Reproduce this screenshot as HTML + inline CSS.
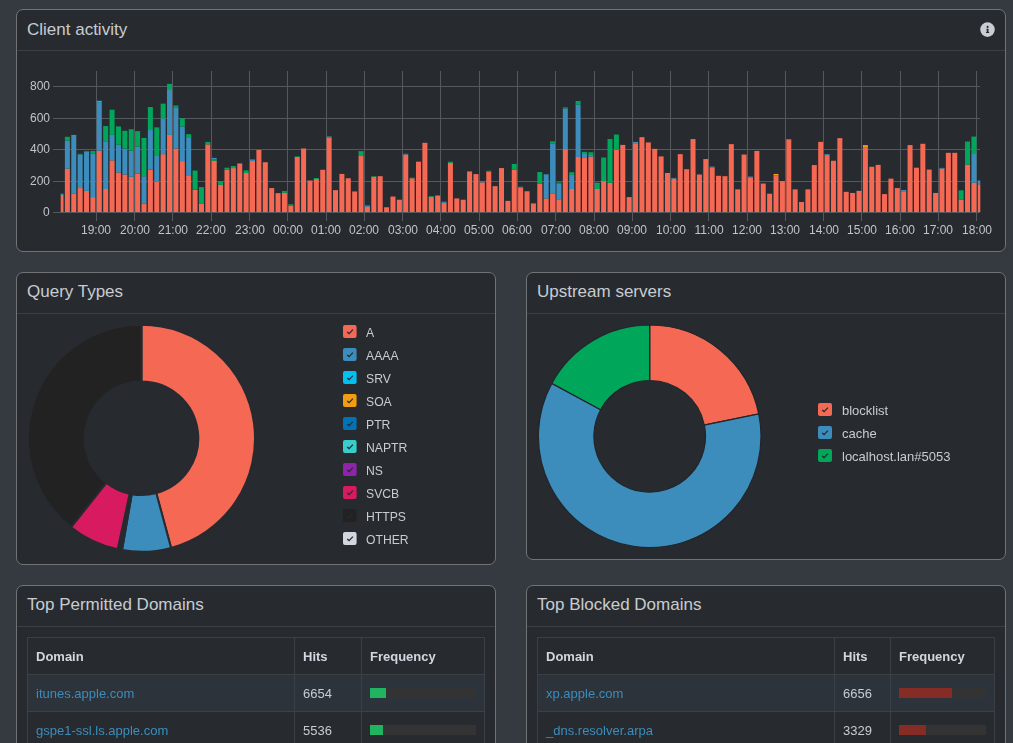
<!DOCTYPE html>
<html><head><meta charset="utf-8"><style>
html,body{margin:0;padding:0;}
body{width:1013px;height:743px;overflow:hidden;background:#343a40;position:relative;font-family:"Liberation Sans", sans-serif;}
.p{position:absolute;box-sizing:border-box;background:#272b30;border:1px solid #717375;border-radius:7px;}
.t{position:absolute;white-space:nowrap;}
</style></head><body>
<div class="p" style="left:16px;top:9px;width:990px;height:243px;"></div><div style="position:absolute;left:17px;top:50px;width:988px;height:1px;background:#393f46"></div>
<div class="t" style="left:27px;top:20.61px;font-size:17px;line-height:17px;color:#c8ccd1;font-weight:normal;">Client activity</div>
<div class="p" style="left:16px;top:272px;width:480px;height:293px;"></div><div style="position:absolute;left:17px;top:313px;width:478px;height:1px;background:#393f46"></div>
<div class="t" style="left:27px;top:283.41px;font-size:17px;line-height:17px;color:#c8ccd1;font-weight:normal;">Query Types</div>
<div class="p" style="left:526px;top:272px;width:480px;height:288px;"></div><div style="position:absolute;left:527px;top:313px;width:478px;height:1px;background:#393f46"></div>
<div class="t" style="left:537px;top:283.41px;font-size:17px;line-height:17px;color:#c8ccd1;font-weight:normal;">Upstream servers</div>
<div class="p" style="left:16px;top:585px;width:480px;height:216px;"></div><div style="position:absolute;left:17px;top:626px;width:478px;height:1px;background:#393f46"></div>
<div class="t" style="left:27px;top:596.41px;font-size:17px;line-height:17px;color:#c8ccd1;font-weight:normal;">Top Permitted Domains</div>
<div class="p" style="left:526px;top:585px;width:480px;height:216px;"></div><div style="position:absolute;left:527px;top:626px;width:478px;height:1px;background:#393f46"></div>
<div class="t" style="left:537px;top:596.41px;font-size:17px;line-height:17px;color:#c8ccd1;font-weight:normal;">Top Blocked Domains</div>
<svg style="position:absolute;left:979px;top:21px" width="17" height="17" viewBox="0 0 17 17"><circle cx="8.5" cy="8.6" r="7.3" fill="#c9ced4"/><circle cx="8.6" cy="5.9" r="1.05" fill="#272b30"/><path d="M7.3 7.7H9.5V11H10.2V11.9H7V11H7.7V8.6H7.3Z" fill="#272b30"/></svg>
<svg style="position:absolute;left:0;top:0" width="1013" height="260">
<rect x="53" y="86" width="927" height="1" fill="#55595d"/>
<rect x="53" y="118" width="927" height="1" fill="#55595d"/>
<rect x="53" y="149" width="927" height="1" fill="#55595d"/>
<rect x="53" y="181" width="927" height="1" fill="#55595d"/>
<rect x="53" y="212" width="927" height="1" fill="#55595d"/>
<rect x="96" y="71" width="1" height="150" fill="#55595d"/>
<rect x="134" y="71" width="1" height="150" fill="#55595d"/>
<rect x="172" y="71" width="1" height="150" fill="#55595d"/>
<rect x="211" y="71" width="1" height="150" fill="#55595d"/>
<rect x="249" y="71" width="1" height="150" fill="#55595d"/>
<rect x="287" y="71" width="1" height="150" fill="#55595d"/>
<rect x="326" y="71" width="1" height="150" fill="#55595d"/>
<rect x="364" y="71" width="1" height="150" fill="#55595d"/>
<rect x="402" y="71" width="1" height="150" fill="#55595d"/>
<rect x="440" y="71" width="1" height="150" fill="#55595d"/>
<rect x="479" y="71" width="1" height="150" fill="#55595d"/>
<rect x="517" y="71" width="1" height="150" fill="#55595d"/>
<rect x="555" y="71" width="1" height="150" fill="#55595d"/>
<rect x="594" y="71" width="1" height="150" fill="#55595d"/>
<rect x="632" y="71" width="1" height="150" fill="#55595d"/>
<rect x="670" y="71" width="1" height="150" fill="#55595d"/>
<rect x="708" y="71" width="1" height="150" fill="#55595d"/>
<rect x="747" y="71" width="1" height="150" fill="#55595d"/>
<rect x="785" y="71" width="1" height="150" fill="#55595d"/>
<rect x="823" y="71" width="1" height="150" fill="#55595d"/>
<rect x="861" y="71" width="1" height="150" fill="#55595d"/>
<rect x="900" y="71" width="1" height="150" fill="#55595d"/>
<rect x="938" y="71" width="1" height="150" fill="#55595d"/>
<rect x="976" y="71" width="1" height="150" fill="#55595d"/>
<rect x="60.70" y="194.65" width="2.80" height="17.35" fill="#f56954"/>
<rect x="60.70" y="193.71" width="2.80" height="0.94" fill="#00c0ef"/>
<rect x="64.88" y="168.65" width="5.00" height="43.35" fill="#f56954"/>
<rect x="64.88" y="140.57" width="5.00" height="28.08" fill="#3c8dbc"/>
<rect x="64.88" y="136.81" width="5.00" height="3.77" fill="#00a65a"/>
<rect x="71.27" y="193.33" width="5.00" height="18.67" fill="#f56954"/>
<rect x="71.27" y="134.92" width="5.00" height="58.41" fill="#3c8dbc"/>
<rect x="77.65" y="188.06" width="5.00" height="23.94" fill="#f56954"/>
<rect x="77.65" y="154.52" width="5.00" height="33.54" fill="#3c8dbc"/>
<rect x="77.65" y="153.76" width="5.00" height="0.75" fill="#00a65a"/>
<rect x="84.04" y="190.88" width="5.00" height="21.12" fill="#f56954"/>
<rect x="84.04" y="151.69" width="5.00" height="39.19" fill="#3c8dbc"/>
<rect x="84.04" y="150.94" width="5.00" height="0.75" fill="#00a65a"/>
<rect x="90.42" y="197.10" width="5.00" height="14.90" fill="#f56954"/>
<rect x="90.42" y="153.76" width="5.00" height="43.34" fill="#3c8dbc"/>
<rect x="90.42" y="150.94" width="5.00" height="2.83" fill="#00a65a"/>
<rect x="96.80" y="150.75" width="5.00" height="61.25" fill="#f56954"/>
<rect x="96.80" y="102.51" width="5.00" height="48.24" fill="#3c8dbc"/>
<rect x="96.80" y="100.81" width="5.00" height="1.70" fill="#00c0ef"/>
<rect x="103.19" y="189.00" width="5.00" height="23.00" fill="#f56954"/>
<rect x="103.19" y="141.89" width="5.00" height="47.11" fill="#3c8dbc"/>
<rect x="103.19" y="126.06" width="5.00" height="15.83" fill="#00a65a"/>
<rect x="109.57" y="160.36" width="5.00" height="51.64" fill="#f56954"/>
<rect x="109.57" y="134.92" width="5.00" height="25.44" fill="#3c8dbc"/>
<rect x="109.57" y="109.67" width="5.00" height="25.25" fill="#00a65a"/>
<rect x="115.96" y="172.42" width="5.00" height="39.58" fill="#f56954"/>
<rect x="115.96" y="144.72" width="5.00" height="27.70" fill="#3c8dbc"/>
<rect x="115.96" y="126.44" width="5.00" height="18.28" fill="#00a65a"/>
<rect x="122.34" y="174.49" width="5.00" height="37.51" fill="#f56954"/>
<rect x="122.34" y="148.49" width="5.00" height="26.00" fill="#3c8dbc"/>
<rect x="122.34" y="130.78" width="5.00" height="17.71" fill="#00a65a"/>
<rect x="128.72" y="176.75" width="5.00" height="35.25" fill="#f56954"/>
<rect x="128.72" y="150.75" width="5.00" height="26.00" fill="#3c8dbc"/>
<rect x="128.72" y="129.27" width="5.00" height="21.48" fill="#00a65a"/>
<rect x="135.11" y="173.74" width="5.00" height="38.26" fill="#f56954"/>
<rect x="135.11" y="146.60" width="5.00" height="27.13" fill="#3c8dbc"/>
<rect x="135.11" y="131.15" width="5.00" height="15.45" fill="#00a65a"/>
<rect x="141.49" y="203.70" width="5.00" height="8.30" fill="#f56954"/>
<rect x="141.49" y="176.19" width="5.00" height="27.51" fill="#3c8dbc"/>
<rect x="141.49" y="137.94" width="5.00" height="38.25" fill="#00a65a"/>
<rect x="147.88" y="169.59" width="5.00" height="42.41" fill="#f56954"/>
<rect x="147.88" y="130.02" width="5.00" height="39.57" fill="#3c8dbc"/>
<rect x="147.88" y="107.03" width="5.00" height="22.99" fill="#00a65a"/>
<rect x="154.26" y="181.84" width="5.00" height="30.16" fill="#f56954"/>
<rect x="154.26" y="156.03" width="5.00" height="25.81" fill="#3c8dbc"/>
<rect x="154.26" y="127.38" width="5.00" height="28.64" fill="#00a65a"/>
<rect x="160.64" y="154.14" width="5.00" height="57.86" fill="#f56954"/>
<rect x="160.64" y="118.34" width="5.00" height="35.80" fill="#3c8dbc"/>
<rect x="160.64" y="103.64" width="5.00" height="14.70" fill="#00a65a"/>
<rect x="167.03" y="134.92" width="5.00" height="77.08" fill="#f56954"/>
<rect x="167.03" y="89.13" width="5.00" height="45.79" fill="#3c8dbc"/>
<rect x="167.03" y="83.86" width="5.00" height="5.28" fill="#00a65a"/>
<rect x="173.41" y="148.49" width="5.00" height="63.51" fill="#f56954"/>
<rect x="173.41" y="107.60" width="5.00" height="40.89" fill="#3c8dbc"/>
<rect x="173.41" y="105.53" width="5.00" height="2.07" fill="#00a65a"/>
<rect x="179.80" y="161.11" width="5.00" height="50.89" fill="#f56954"/>
<rect x="179.80" y="126.44" width="5.00" height="34.67" fill="#3c8dbc"/>
<rect x="179.80" y="118.34" width="5.00" height="8.10" fill="#00a65a"/>
<rect x="186.18" y="175.24" width="5.00" height="36.76" fill="#f56954"/>
<rect x="186.18" y="137.18" width="5.00" height="38.06" fill="#3c8dbc"/>
<rect x="186.18" y="134.17" width="5.00" height="3.01" fill="#00a65a"/>
<rect x="192.56" y="189.75" width="5.00" height="22.25" fill="#f56954"/>
<rect x="192.56" y="170.53" width="5.00" height="19.22" fill="#00a65a"/>
<rect x="198.95" y="203.89" width="5.00" height="8.11" fill="#f56954"/>
<rect x="198.95" y="187.12" width="5.00" height="16.77" fill="#00a65a"/>
<rect x="205.33" y="144.34" width="5.00" height="67.66" fill="#f56954"/>
<rect x="205.33" y="141.89" width="5.00" height="2.45" fill="#00a65a"/>
<rect x="211.72" y="160.74" width="5.00" height="51.26" fill="#f56954"/>
<rect x="211.72" y="159.42" width="5.00" height="1.32" fill="#00a65a"/>
<rect x="211.72" y="157.91" width="5.00" height="1.51" fill="#3c8dbc"/>
<rect x="218.10" y="184.85" width="5.00" height="27.15" fill="#f56954"/>
<rect x="218.10" y="181.09" width="5.00" height="3.77" fill="#00a65a"/>
<rect x="224.48" y="169.78" width="5.00" height="42.22" fill="#f56954"/>
<rect x="224.48" y="167.71" width="5.00" height="2.07" fill="#00a65a"/>
<rect x="230.87" y="168.08" width="5.00" height="43.92" fill="#f56954"/>
<rect x="230.87" y="166.01" width="5.00" height="2.07" fill="#00a65a"/>
<rect x="237.25" y="163.56" width="5.00" height="48.44" fill="#f56954"/>
<rect x="237.25" y="163.00" width="5.00" height="0.57" fill="#00a65a"/>
<rect x="243.64" y="172.98" width="5.00" height="39.02" fill="#f56954"/>
<rect x="243.64" y="170.35" width="5.00" height="2.64" fill="#00a65a"/>
<rect x="250.02" y="160.92" width="5.00" height="51.08" fill="#f56954"/>
<rect x="250.02" y="159.42" width="5.00" height="1.51" fill="#3c8dbc"/>
<rect x="256.40" y="150.00" width="5.00" height="62.00" fill="#f56954"/>
<rect x="262.79" y="162.24" width="5.00" height="49.76" fill="#f56954"/>
<rect x="269.17" y="188.06" width="5.00" height="23.94" fill="#f56954"/>
<rect x="275.56" y="193.15" width="5.00" height="18.85" fill="#f56954"/>
<rect x="281.94" y="192.77" width="5.00" height="19.23" fill="#f56954"/>
<rect x="281.94" y="191.07" width="5.00" height="1.70" fill="#00a65a"/>
<rect x="288.32" y="205.58" width="5.00" height="6.42" fill="#f56954"/>
<rect x="288.32" y="204.26" width="5.00" height="1.32" fill="#00a65a"/>
<rect x="294.71" y="156.97" width="5.00" height="55.03" fill="#f56954"/>
<rect x="294.71" y="156.40" width="5.00" height="0.57" fill="#00a65a"/>
<rect x="301.09" y="148.49" width="5.00" height="63.51" fill="#f56954"/>
<rect x="307.48" y="180.52" width="5.00" height="31.48" fill="#f56954"/>
<rect x="313.86" y="179.01" width="5.00" height="32.99" fill="#f56954"/>
<rect x="313.86" y="178.07" width="5.00" height="0.94" fill="#00a65a"/>
<rect x="320.24" y="169.78" width="5.00" height="42.22" fill="#f56954"/>
<rect x="326.63" y="137.56" width="5.00" height="74.44" fill="#f56954"/>
<rect x="326.63" y="136.43" width="5.00" height="1.13" fill="#3c8dbc"/>
<rect x="333.01" y="190.13" width="5.00" height="21.87" fill="#f56954"/>
<rect x="339.40" y="173.93" width="5.00" height="38.07" fill="#f56954"/>
<rect x="345.78" y="178.26" width="5.00" height="33.74" fill="#f56954"/>
<rect x="352.16" y="191.45" width="5.00" height="20.55" fill="#f56954"/>
<rect x="358.55" y="156.03" width="5.00" height="55.97" fill="#f56954"/>
<rect x="358.55" y="151.13" width="5.00" height="4.90" fill="#00a65a"/>
<rect x="364.93" y="206.90" width="5.00" height="5.10" fill="#f56954"/>
<rect x="364.93" y="205.39" width="5.00" height="1.51" fill="#3c8dbc"/>
<rect x="371.32" y="176.75" width="5.00" height="35.25" fill="#f56954"/>
<rect x="371.32" y="176.19" width="5.00" height="0.57" fill="#00a65a"/>
<rect x="377.70" y="176.19" width="5.00" height="35.81" fill="#f56954"/>
<rect x="384.08" y="207.28" width="5.00" height="4.72" fill="#f56954"/>
<rect x="390.47" y="196.54" width="5.00" height="15.46" fill="#f56954"/>
<rect x="396.85" y="199.74" width="5.00" height="12.26" fill="#f56954"/>
<rect x="403.24" y="154.52" width="5.00" height="57.48" fill="#f56954"/>
<rect x="403.24" y="153.76" width="5.00" height="0.75" fill="#3c8dbc"/>
<rect x="409.62" y="178.26" width="5.00" height="33.74" fill="#f56954"/>
<rect x="409.62" y="177.69" width="5.00" height="0.57" fill="#00a65a"/>
<rect x="416.00" y="161.68" width="5.00" height="50.32" fill="#f56954"/>
<rect x="422.39" y="142.83" width="5.00" height="69.17" fill="#f56954"/>
<rect x="428.77" y="196.73" width="5.00" height="15.27" fill="#f56954"/>
<rect x="428.77" y="195.97" width="5.00" height="0.75" fill="#00a65a"/>
<rect x="435.16" y="195.60" width="5.00" height="16.40" fill="#f56954"/>
<rect x="435.16" y="195.22" width="5.00" height="0.38" fill="#00a65a"/>
<rect x="441.54" y="202.76" width="5.00" height="9.24" fill="#f56954"/>
<rect x="441.54" y="201.63" width="5.00" height="1.13" fill="#3c8dbc"/>
<rect x="447.92" y="162.81" width="5.00" height="49.19" fill="#f56954"/>
<rect x="447.92" y="161.68" width="5.00" height="1.13" fill="#00a65a"/>
<rect x="454.31" y="198.42" width="5.00" height="13.58" fill="#f56954"/>
<rect x="460.69" y="199.74" width="5.00" height="12.26" fill="#f56954"/>
<rect x="467.08" y="172.04" width="5.00" height="39.96" fill="#f56954"/>
<rect x="467.08" y="171.10" width="5.00" height="0.94" fill="#00a65a"/>
<rect x="473.46" y="174.11" width="5.00" height="37.89" fill="#f56954"/>
<rect x="479.84" y="182.41" width="5.00" height="29.59" fill="#f56954"/>
<rect x="479.84" y="181.46" width="5.00" height="0.94" fill="#3c8dbc"/>
<rect x="486.23" y="171.48" width="5.00" height="40.52" fill="#f56954"/>
<rect x="486.23" y="170.72" width="5.00" height="0.75" fill="#00a65a"/>
<rect x="492.61" y="186.17" width="5.00" height="25.83" fill="#f56954"/>
<rect x="499.00" y="168.08" width="5.00" height="43.92" fill="#f56954"/>
<rect x="505.38" y="200.87" width="5.00" height="11.13" fill="#f56954"/>
<rect x="511.76" y="169.78" width="5.00" height="42.22" fill="#f56954"/>
<rect x="511.76" y="163.94" width="5.00" height="5.84" fill="#00a65a"/>
<rect x="518.15" y="187.68" width="5.00" height="24.32" fill="#f56954"/>
<rect x="518.15" y="186.74" width="5.00" height="0.94" fill="#3c8dbc"/>
<rect x="524.53" y="191.26" width="5.00" height="20.74" fill="#f56954"/>
<rect x="530.92" y="203.51" width="5.00" height="8.49" fill="#f56954"/>
<rect x="530.92" y="202.94" width="5.00" height="0.57" fill="#00a65a"/>
<rect x="537.30" y="183.72" width="5.00" height="28.28" fill="#f56954"/>
<rect x="537.30" y="172.04" width="5.00" height="11.68" fill="#00a65a"/>
<rect x="543.68" y="198.42" width="5.00" height="13.58" fill="#f56954"/>
<rect x="543.68" y="174.30" width="5.00" height="24.12" fill="#3c8dbc"/>
<rect x="550.07" y="193.33" width="5.00" height="18.67" fill="#f56954"/>
<rect x="550.07" y="143.78" width="5.00" height="49.56" fill="#3c8dbc"/>
<rect x="550.07" y="141.33" width="5.00" height="2.45" fill="#00a65a"/>
<rect x="556.45" y="199.36" width="5.00" height="12.64" fill="#f56954"/>
<rect x="556.45" y="183.54" width="5.00" height="15.83" fill="#3c8dbc"/>
<rect x="556.45" y="182.41" width="5.00" height="1.13" fill="#00a65a"/>
<rect x="562.84" y="149.05" width="5.00" height="62.95" fill="#f56954"/>
<rect x="562.84" y="108.54" width="5.00" height="40.51" fill="#3c8dbc"/>
<rect x="562.84" y="107.41" width="5.00" height="1.13" fill="#00a65a"/>
<rect x="569.22" y="189.00" width="5.00" height="23.00" fill="#f56954"/>
<rect x="569.22" y="174.87" width="5.00" height="14.13" fill="#3c8dbc"/>
<rect x="569.22" y="172.23" width="5.00" height="2.64" fill="#00a65a"/>
<rect x="575.60" y="156.97" width="5.00" height="55.03" fill="#f56954"/>
<rect x="575.60" y="104.58" width="5.00" height="52.38" fill="#3c8dbc"/>
<rect x="575.60" y="101.00" width="5.00" height="3.58" fill="#00a65a"/>
<rect x="581.99" y="157.91" width="5.00" height="54.09" fill="#f56954"/>
<rect x="581.99" y="153.20" width="5.00" height="4.71" fill="#3c8dbc"/>
<rect x="581.99" y="151.88" width="5.00" height="1.32" fill="#00a65a"/>
<rect x="588.37" y="156.59" width="5.00" height="55.41" fill="#f56954"/>
<rect x="588.37" y="154.89" width="5.00" height="1.70" fill="#3c8dbc"/>
<rect x="588.37" y="152.26" width="5.00" height="2.64" fill="#00a65a"/>
<rect x="594.76" y="189.00" width="5.00" height="23.00" fill="#f56954"/>
<rect x="594.76" y="183.91" width="5.00" height="5.09" fill="#00a65a"/>
<rect x="594.76" y="182.78" width="5.00" height="1.13" fill="#3c8dbc"/>
<rect x="601.14" y="181.09" width="5.00" height="30.91" fill="#f56954"/>
<rect x="601.14" y="157.53" width="5.00" height="23.55" fill="#00a65a"/>
<rect x="607.52" y="182.78" width="5.00" height="29.22" fill="#f56954"/>
<rect x="607.52" y="139.07" width="5.00" height="43.72" fill="#00a65a"/>
<rect x="613.91" y="149.81" width="5.00" height="62.19" fill="#f56954"/>
<rect x="613.91" y="134.54" width="5.00" height="15.26" fill="#00a65a"/>
<rect x="620.29" y="144.91" width="5.00" height="67.09" fill="#f56954"/>
<rect x="626.68" y="197.10" width="5.00" height="14.90" fill="#f56954"/>
<rect x="633.06" y="143.21" width="5.00" height="68.79" fill="#f56954"/>
<rect x="633.06" y="141.89" width="5.00" height="1.32" fill="#3c8dbc"/>
<rect x="639.44" y="137.18" width="5.00" height="74.82" fill="#f56954"/>
<rect x="645.83" y="142.46" width="5.00" height="69.54" fill="#f56954"/>
<rect x="652.21" y="148.86" width="5.00" height="63.14" fill="#f56954"/>
<rect x="658.60" y="156.40" width="5.00" height="55.60" fill="#f56954"/>
<rect x="664.98" y="172.98" width="5.00" height="39.02" fill="#f56954"/>
<rect x="671.36" y="178.64" width="5.00" height="33.36" fill="#f56954"/>
<rect x="671.36" y="177.88" width="5.00" height="0.75" fill="#3c8dbc"/>
<rect x="677.75" y="154.14" width="5.00" height="57.86" fill="#f56954"/>
<rect x="684.13" y="169.22" width="5.00" height="42.78" fill="#f56954"/>
<rect x="690.52" y="139.07" width="5.00" height="72.93" fill="#f56954"/>
<rect x="696.90" y="174.49" width="5.00" height="37.51" fill="#f56954"/>
<rect x="703.28" y="159.04" width="5.00" height="52.96" fill="#f56954"/>
<rect x="709.67" y="167.33" width="5.00" height="44.67" fill="#f56954"/>
<rect x="709.67" y="166.58" width="5.00" height="0.75" fill="#3c8dbc"/>
<rect x="716.05" y="175.81" width="5.00" height="36.19" fill="#f56954"/>
<rect x="722.44" y="176.19" width="5.00" height="35.81" fill="#f56954"/>
<rect x="728.82" y="144.15" width="5.00" height="67.85" fill="#f56954"/>
<rect x="735.20" y="189.38" width="5.00" height="22.62" fill="#f56954"/>
<rect x="741.59" y="154.52" width="5.00" height="57.48" fill="#f56954"/>
<rect x="747.97" y="177.32" width="5.00" height="34.68" fill="#f56954"/>
<rect x="747.97" y="176.56" width="5.00" height="0.75" fill="#3c8dbc"/>
<rect x="754.36" y="150.94" width="5.00" height="61.06" fill="#f56954"/>
<rect x="760.74" y="183.54" width="5.00" height="28.46" fill="#f56954"/>
<rect x="767.12" y="193.71" width="5.00" height="18.29" fill="#f56954"/>
<rect x="773.51" y="175.43" width="5.00" height="36.57" fill="#f56954"/>
<rect x="773.51" y="173.93" width="5.00" height="1.51" fill="#f39c12"/>
<rect x="779.89" y="181.09" width="5.00" height="30.91" fill="#f56954"/>
<rect x="786.28" y="140.01" width="5.00" height="71.99" fill="#f56954"/>
<rect x="786.28" y="139.07" width="5.00" height="0.94" fill="#3c8dbc"/>
<rect x="792.66" y="189.38" width="5.00" height="22.62" fill="#f56954"/>
<rect x="799.04" y="202.00" width="5.00" height="10.00" fill="#f56954"/>
<rect x="805.43" y="189.38" width="5.00" height="22.62" fill="#f56954"/>
<rect x="811.81" y="165.07" width="5.00" height="46.93" fill="#f56954"/>
<rect x="818.20" y="141.89" width="5.00" height="70.11" fill="#f56954"/>
<rect x="824.58" y="155.08" width="5.00" height="56.92" fill="#f56954"/>
<rect x="824.58" y="154.14" width="5.00" height="0.94" fill="#3c8dbc"/>
<rect x="830.96" y="160.74" width="5.00" height="51.26" fill="#f56954"/>
<rect x="837.35" y="138.12" width="5.00" height="73.88" fill="#f56954"/>
<rect x="843.73" y="191.83" width="5.00" height="20.17" fill="#f56954"/>
<rect x="850.12" y="192.96" width="5.00" height="19.04" fill="#f56954"/>
<rect x="856.50" y="190.88" width="5.00" height="21.12" fill="#f56954"/>
<rect x="862.88" y="147.17" width="5.00" height="64.83" fill="#f56954"/>
<rect x="862.88" y="145.10" width="5.00" height="2.07" fill="#f39c12"/>
<rect x="869.27" y="166.77" width="5.00" height="45.23" fill="#f56954"/>
<rect x="875.65" y="164.88" width="5.00" height="47.12" fill="#f56954"/>
<rect x="882.04" y="194.09" width="5.00" height="17.91" fill="#f56954"/>
<rect x="888.42" y="178.64" width="5.00" height="33.36" fill="#f56954"/>
<rect x="894.80" y="188.06" width="5.00" height="23.94" fill="#f56954"/>
<rect x="901.19" y="191.26" width="5.00" height="20.74" fill="#f56954"/>
<rect x="901.19" y="189.94" width="5.00" height="1.32" fill="#3c8dbc"/>
<rect x="907.57" y="145.10" width="5.00" height="66.90" fill="#f56954"/>
<rect x="913.96" y="167.71" width="5.00" height="44.29" fill="#f56954"/>
<rect x="920.34" y="143.78" width="5.00" height="68.22" fill="#f56954"/>
<rect x="926.72" y="169.59" width="5.00" height="42.41" fill="#f56954"/>
<rect x="933.11" y="192.96" width="5.00" height="19.04" fill="#f56954"/>
<rect x="939.49" y="168.65" width="5.00" height="43.35" fill="#f56954"/>
<rect x="939.49" y="167.90" width="5.00" height="0.75" fill="#3c8dbc"/>
<rect x="945.88" y="152.82" width="5.00" height="59.18" fill="#f56954"/>
<rect x="952.26" y="152.82" width="5.00" height="59.18" fill="#f56954"/>
<rect x="958.64" y="199.74" width="5.00" height="12.26" fill="#f56954"/>
<rect x="958.64" y="190.32" width="5.00" height="9.42" fill="#00a65a"/>
<rect x="965.03" y="164.50" width="5.00" height="47.50" fill="#f56954"/>
<rect x="965.03" y="141.52" width="5.00" height="22.99" fill="#00a65a"/>
<rect x="971.41" y="182.78" width="5.00" height="29.22" fill="#f56954"/>
<rect x="971.41" y="153.20" width="5.00" height="29.58" fill="#3c8dbc"/>
<rect x="971.41" y="136.62" width="5.00" height="16.58" fill="#00a65a"/>
<rect x="977.80" y="184.29" width="2.50" height="27.71" fill="#f56954"/>
<rect x="977.80" y="180.52" width="2.50" height="3.77" fill="#3c8dbc"/>
</svg>
<div class="t" style="right:963px;text-align:right;top:79.84px;font-size:12px;line-height:12px;color:#bfc5ca;font-weight:normal;will-change:transform;">800</div>
<div class="t" style="right:963px;text-align:right;top:111.84px;font-size:12px;line-height:12px;color:#bfc5ca;font-weight:normal;will-change:transform;">600</div>
<div class="t" style="right:963px;text-align:right;top:142.84px;font-size:12px;line-height:12px;color:#bfc5ca;font-weight:normal;will-change:transform;">400</div>
<div class="t" style="right:963px;text-align:right;top:174.84px;font-size:12px;line-height:12px;color:#bfc5ca;font-weight:normal;will-change:transform;">200</div>
<div class="t" style="right:963px;text-align:right;top:205.84px;font-size:12px;line-height:12px;color:#bfc5ca;font-weight:normal;will-change:transform;">0</div>
<div class="t" style="left:-103.6px;width:400px;text-align:center;top:224.34px;font-size:12px;line-height:12px;color:#bfc5ca;font-weight:normal;will-change:transform;">19:00</div>
<div class="t" style="left:-65.32px;width:400px;text-align:center;top:224.34px;font-size:12px;line-height:12px;color:#bfc5ca;font-weight:normal;will-change:transform;">20:00</div>
<div class="t" style="left:-27.05000000000001px;width:400px;text-align:center;top:224.34px;font-size:12px;line-height:12px;color:#bfc5ca;font-weight:normal;will-change:transform;">21:00</div>
<div class="t" style="left:11.22999999999999px;width:400px;text-align:center;top:224.34px;font-size:12px;line-height:12px;color:#bfc5ca;font-weight:normal;will-change:transform;">22:00</div>
<div class="t" style="left:49.50999999999999px;width:400px;text-align:center;top:224.34px;font-size:12px;line-height:12px;color:#bfc5ca;font-weight:normal;will-change:transform;">23:00</div>
<div class="t" style="left:87.77999999999997px;width:400px;text-align:center;top:224.34px;font-size:12px;line-height:12px;color:#bfc5ca;font-weight:normal;will-change:transform;">00:00</div>
<div class="t" style="left:126.06px;width:400px;text-align:center;top:224.34px;font-size:12px;line-height:12px;color:#bfc5ca;font-weight:normal;will-change:transform;">01:00</div>
<div class="t" style="left:164.33999999999997px;width:400px;text-align:center;top:224.34px;font-size:12px;line-height:12px;color:#bfc5ca;font-weight:normal;will-change:transform;">02:00</div>
<div class="t" style="left:202.62px;width:400px;text-align:center;top:224.34px;font-size:12px;line-height:12px;color:#bfc5ca;font-weight:normal;will-change:transform;">03:00</div>
<div class="t" style="left:240.89px;width:400px;text-align:center;top:224.34px;font-size:12px;line-height:12px;color:#bfc5ca;font-weight:normal;will-change:transform;">04:00</div>
<div class="t" style="left:279.17px;width:400px;text-align:center;top:224.34px;font-size:12px;line-height:12px;color:#bfc5ca;font-weight:normal;will-change:transform;">05:00</div>
<div class="t" style="left:317.45000000000005px;width:400px;text-align:center;top:224.34px;font-size:12px;line-height:12px;color:#bfc5ca;font-weight:normal;will-change:transform;">06:00</div>
<div class="t" style="left:355.72px;width:400px;text-align:center;top:224.34px;font-size:12px;line-height:12px;color:#bfc5ca;font-weight:normal;will-change:transform;">07:00</div>
<div class="t" style="left:394.0px;width:400px;text-align:center;top:224.34px;font-size:12px;line-height:12px;color:#bfc5ca;font-weight:normal;will-change:transform;">08:00</div>
<div class="t" style="left:432.28px;width:400px;text-align:center;top:224.34px;font-size:12px;line-height:12px;color:#bfc5ca;font-weight:normal;will-change:transform;">09:00</div>
<div class="t" style="left:470.54999999999995px;width:400px;text-align:center;top:224.34px;font-size:12px;line-height:12px;color:#bfc5ca;font-weight:normal;will-change:transform;">10:00</div>
<div class="t" style="left:508.83000000000004px;width:400px;text-align:center;top:224.34px;font-size:12px;line-height:12px;color:#bfc5ca;font-weight:normal;will-change:transform;">11:00</div>
<div class="t" style="left:547.11px;width:400px;text-align:center;top:224.34px;font-size:12px;line-height:12px;color:#bfc5ca;font-weight:normal;will-change:transform;">12:00</div>
<div class="t" style="left:585.39px;width:400px;text-align:center;top:224.34px;font-size:12px;line-height:12px;color:#bfc5ca;font-weight:normal;will-change:transform;">13:00</div>
<div class="t" style="left:623.66px;width:400px;text-align:center;top:224.34px;font-size:12px;line-height:12px;color:#bfc5ca;font-weight:normal;will-change:transform;">14:00</div>
<div class="t" style="left:661.94px;width:400px;text-align:center;top:224.34px;font-size:12px;line-height:12px;color:#bfc5ca;font-weight:normal;will-change:transform;">15:00</div>
<div class="t" style="left:700.22px;width:400px;text-align:center;top:224.34px;font-size:12px;line-height:12px;color:#bfc5ca;font-weight:normal;will-change:transform;">16:00</div>
<div class="t" style="left:738.49px;width:400px;text-align:center;top:224.34px;font-size:12px;line-height:12px;color:#bfc5ca;font-weight:normal;will-change:transform;">17:00</div>
<div class="t" style="left:776.77px;width:400px;text-align:center;top:224.34px;font-size:12px;line-height:12px;color:#bfc5ca;font-weight:normal;will-change:transform;">18:00</div>
<svg style="position:absolute;left:0;top:0" width="1013" height="743">
<path d="M141.50,324.80 A113.5,113.5 0 0 1 171.07,547.88 L156.30,493.14 A56.8,56.8 0 0 0 141.50,381.50 Z" fill="#f56954" stroke="#272b30" stroke-width="2"/>
<path d="M171.07,547.88 A113.5,113.5 0 0 1 121.99,550.11 L131.73,494.25 A56.8,56.8 0 0 0 156.30,493.14 Z" fill="#3c8dbc" stroke="#272b30" stroke-width="2"/>
<path d="M121.99,550.11 A113.5,113.5 0 0 1 117.71,549.28 L129.59,493.84 A56.8,56.8 0 0 0 131.73,494.25 Z" fill="#272b30" stroke="#272b30" stroke-width="2"/>
<path d="M117.71,549.28 A113.5,113.5 0 0 1 71.00,527.25 L106.22,482.81 A56.8,56.8 0 0 0 129.59,493.84 Z" fill="#d81b60" stroke="#272b30" stroke-width="2"/>
<path d="M71.00,527.25 A113.5,113.5 0 0 1 141.50,324.80 L141.50,381.50 A56.8,56.8 0 0 0 106.22,482.81 Z" fill="#222222" stroke="#272b30" stroke-width="2"/>
<path d="M649.70,325.00 A111.3,111.3 0 0 1 758.73,413.92 L704.36,425.08 A55.8,55.8 0 0 0 649.70,380.50 Z" fill="#f56954" stroke="#22262a" stroke-width="1.2"/>
<path d="M758.73,413.92 A111.3,111.3 0 1 1 551.80,383.36 L600.62,409.76 A55.8,55.8 0 1 0 704.36,425.08 Z" fill="#3c8dbc" stroke="#22262a" stroke-width="1.2"/>
<path d="M551.80,383.36 A111.3,111.3 0 0 1 649.70,325.00 L649.70,380.50 A55.8,55.8 0 0 0 600.62,409.76 Z" fill="#00a65a" stroke="#22262a" stroke-width="1.2"/>
</svg>
<svg style="position:absolute;left:343px;top:325px" width="13.6" height="13" viewBox="0 0 13.6 13"><rect x="0" y="0" width="13.6" height="13" rx="2" fill="#f56954"/><path d="M4.2 6.9 L6.1 8.6 L9.9 4.6" fill="none" stroke="#272b30" stroke-width="1.3"/></svg>
<div class="t" style="left:366px;top:326.67px;font-size:12.2px;line-height:12.2px;color:#c8ccd1;font-weight:normal;">A</div>
<svg style="position:absolute;left:343px;top:348px" width="13.6" height="13" viewBox="0 0 13.6 13"><rect x="0" y="0" width="13.6" height="13" rx="2" fill="#3c8dbc"/><path d="M4.2 6.9 L6.1 8.6 L9.9 4.6" fill="none" stroke="#272b30" stroke-width="1.3"/></svg>
<div class="t" style="left:366px;top:349.67px;font-size:12.2px;line-height:12.2px;color:#c8ccd1;font-weight:normal;">AAAA</div>
<svg style="position:absolute;left:343px;top:371px" width="13.6" height="13" viewBox="0 0 13.6 13"><rect x="0" y="0" width="13.6" height="13" rx="2" fill="#00c0ef"/><path d="M4.2 6.9 L6.1 8.6 L9.9 4.6" fill="none" stroke="#272b30" stroke-width="1.3"/></svg>
<div class="t" style="left:366px;top:372.67px;font-size:12.2px;line-height:12.2px;color:#c8ccd1;font-weight:normal;">SRV</div>
<svg style="position:absolute;left:343px;top:394px" width="13.6" height="13" viewBox="0 0 13.6 13"><rect x="0" y="0" width="13.6" height="13" rx="2" fill="#f39c12"/><path d="M4.2 6.9 L6.1 8.6 L9.9 4.6" fill="none" stroke="#272b30" stroke-width="1.3"/></svg>
<div class="t" style="left:366px;top:395.67px;font-size:12.2px;line-height:12.2px;color:#c8ccd1;font-weight:normal;">SOA</div>
<svg style="position:absolute;left:343px;top:417px" width="13.6" height="13" viewBox="0 0 13.6 13"><rect x="0" y="0" width="13.6" height="13" rx="2" fill="#0073b7"/><path d="M4.2 6.9 L6.1 8.6 L9.9 4.6" fill="none" stroke="#272b30" stroke-width="1.3"/></svg>
<div class="t" style="left:366px;top:418.67px;font-size:12.2px;line-height:12.2px;color:#c8ccd1;font-weight:normal;">PTR</div>
<svg style="position:absolute;left:343px;top:440px" width="13.6" height="13" viewBox="0 0 13.6 13"><rect x="0" y="0" width="13.6" height="13" rx="2" fill="#39cccc"/><path d="M4.2 6.9 L6.1 8.6 L9.9 4.6" fill="none" stroke="#272b30" stroke-width="1.3"/></svg>
<div class="t" style="left:366px;top:441.67px;font-size:12.2px;line-height:12.2px;color:#c8ccd1;font-weight:normal;">NAPTR</div>
<svg style="position:absolute;left:343px;top:463px" width="13.6" height="13" viewBox="0 0 13.6 13"><rect x="0" y="0" width="13.6" height="13" rx="2" fill="#8e24aa"/><path d="M4.2 6.9 L6.1 8.6 L9.9 4.6" fill="none" stroke="#272b30" stroke-width="1.3"/></svg>
<div class="t" style="left:366px;top:464.67px;font-size:12.2px;line-height:12.2px;color:#c8ccd1;font-weight:normal;">NS</div>
<svg style="position:absolute;left:343px;top:486px" width="13.6" height="13" viewBox="0 0 13.6 13"><rect x="0" y="0" width="13.6" height="13" rx="2" fill="#d81b60"/><path d="M4.2 6.9 L6.1 8.6 L9.9 4.6" fill="none" stroke="#272b30" stroke-width="1.3"/></svg>
<div class="t" style="left:366px;top:487.67px;font-size:12.2px;line-height:12.2px;color:#c8ccd1;font-weight:normal;">SVCB</div>
<svg style="position:absolute;left:343px;top:509px" width="13.6" height="13" viewBox="0 0 13.6 13"><rect x="0" y="0" width="13.6" height="13" rx="2" fill="#222222"/><path d="M4.2 6.9 L6.1 8.6 L9.9 4.6" fill="none" stroke="#272b30" stroke-width="1.3"/></svg>
<div class="t" style="left:366px;top:510.67px;font-size:12.2px;line-height:12.2px;color:#c8ccd1;font-weight:normal;">HTTPS</div>
<svg style="position:absolute;left:343px;top:532px" width="13.6" height="13" viewBox="0 0 13.6 13"><rect x="0" y="0" width="13.6" height="13" rx="2" fill="#d2d6de"/><path d="M4.2 6.9 L6.1 8.6 L9.9 4.6" fill="none" stroke="#272b30" stroke-width="1.3"/></svg>
<div class="t" style="left:366px;top:533.67px;font-size:12.2px;line-height:12.2px;color:#c8ccd1;font-weight:normal;">OTHER</div>
<svg style="position:absolute;left:818px;top:403px" width="14" height="13" viewBox="0 0 14 13"><rect x="0" y="0" width="14" height="13" rx="2" fill="#f56954"/><path d="M4.2 6.9 L6.1 8.6 L9.9 4.6" fill="none" stroke="#272b30" stroke-width="1.3"/></svg>
<div class="t" style="left:842px;top:404.00px;font-size:13px;line-height:13px;color:#c8ccd1;font-weight:normal;">blocklist</div>
<svg style="position:absolute;left:818px;top:426px" width="14" height="13" viewBox="0 0 14 13"><rect x="0" y="0" width="14" height="13" rx="2" fill="#3c8dbc"/><path d="M4.2 6.9 L6.1 8.6 L9.9 4.6" fill="none" stroke="#272b30" stroke-width="1.3"/></svg>
<div class="t" style="left:842px;top:427.00px;font-size:13px;line-height:13px;color:#c8ccd1;font-weight:normal;">cache</div>
<svg style="position:absolute;left:818px;top:449px" width="14" height="13" viewBox="0 0 14 13"><rect x="0" y="0" width="14" height="13" rx="2" fill="#00a65a"/><path d="M4.2 6.9 L6.1 8.6 L9.9 4.6" fill="none" stroke="#272b30" stroke-width="1.3"/></svg>
<div class="t" style="left:842px;top:450.00px;font-size:13px;line-height:13px;color:#c8ccd1;font-weight:normal;">localhost.lan#5053</div>
<div style="position:absolute;left:27px;top:674px;width:458px;height:37px;background:#2d333a"></div>
<div style="position:absolute;left:27px;top:637px;width:458px;height:200px;border:1px solid #3b4046;box-sizing:border-box"></div>
<div style="position:absolute;left:27px;top:674px;width:458px;height:1px;background:#3b4046"></div>
<div style="position:absolute;left:27px;top:711px;width:458px;height:1px;background:#3b4046"></div>
<div style="position:absolute;left:27px;top:748px;width:458px;height:1px;background:#3b4046"></div>
<div style="position:absolute;left:294px;top:637px;width:1px;height:200px;background:#3b4046"></div>
<div style="position:absolute;left:361px;top:637px;width:1px;height:200px;background:#3b4046"></div>
<div class="t" style="left:36px;top:650.00px;font-size:13px;line-height:13px;color:#d2d6de;font-weight:bold;">Domain</div>
<div class="t" style="left:303px;top:650.00px;font-size:13px;line-height:13px;color:#d2d6de;font-weight:bold;">Hits</div>
<div class="t" style="left:370px;top:650.00px;font-size:13px;line-height:13px;color:#d2d6de;font-weight:bold;">Frequency</div>
<div class="t" style="left:36px;top:687.20px;font-size:13px;line-height:13px;color:#3c8dbc;font-weight:normal;">itunes.apple.com</div>
<div class="t" style="left:303px;top:687.20px;font-size:13px;line-height:13px;color:#c8ccd1;font-weight:normal;">6654</div>
<div style="position:absolute;left:370px;top:688px;width:106px;height:10px;background:#333"><div style="width:16px;height:10px;background:#20b460"></div></div>
<div class="t" style="left:36px;top:724.20px;font-size:13px;line-height:13px;color:#3c8dbc;font-weight:normal;">gspe1-ssl.ls.apple.com</div>
<div class="t" style="left:303px;top:724.20px;font-size:13px;line-height:13px;color:#c8ccd1;font-weight:normal;">5536</div>
<div style="position:absolute;left:370px;top:725px;width:106px;height:10px;background:#333"><div style="width:13px;height:10px;background:#20b460"></div></div>
<div style="position:absolute;left:537px;top:674px;width:458px;height:37px;background:#2d333a"></div>
<div style="position:absolute;left:537px;top:637px;width:458px;height:200px;border:1px solid #3b4046;box-sizing:border-box"></div>
<div style="position:absolute;left:537px;top:674px;width:458px;height:1px;background:#3b4046"></div>
<div style="position:absolute;left:537px;top:711px;width:458px;height:1px;background:#3b4046"></div>
<div style="position:absolute;left:537px;top:748px;width:458px;height:1px;background:#3b4046"></div>
<div style="position:absolute;left:834px;top:637px;width:1px;height:200px;background:#3b4046"></div>
<div style="position:absolute;left:890px;top:637px;width:1px;height:200px;background:#3b4046"></div>
<div class="t" style="left:546px;top:650.00px;font-size:13px;line-height:13px;color:#d2d6de;font-weight:bold;">Domain</div>
<div class="t" style="left:843px;top:650.00px;font-size:13px;line-height:13px;color:#d2d6de;font-weight:bold;">Hits</div>
<div class="t" style="left:899px;top:650.00px;font-size:13px;line-height:13px;color:#d2d6de;font-weight:bold;">Frequency</div>
<div class="t" style="left:546px;top:687.20px;font-size:13px;line-height:13px;color:#3c8dbc;font-weight:normal;">xp.apple.com</div>
<div class="t" style="left:843px;top:687.20px;font-size:13px;line-height:13px;color:#c8ccd1;font-weight:normal;">6656</div>
<div style="position:absolute;left:899px;top:688px;width:87px;height:10px;background:#333"><div style="width:53px;height:10px;background:#852c24"></div></div>
<div class="t" style="left:546px;top:724.20px;font-size:13px;line-height:13px;color:#3c8dbc;font-weight:normal;">_dns.resolver.arpa</div>
<div class="t" style="left:843px;top:724.20px;font-size:13px;line-height:13px;color:#c8ccd1;font-weight:normal;">3329</div>
<div style="position:absolute;left:899px;top:725px;width:87px;height:10px;background:#333"><div style="width:27px;height:10px;background:#852c24"></div></div>
</body></html>
